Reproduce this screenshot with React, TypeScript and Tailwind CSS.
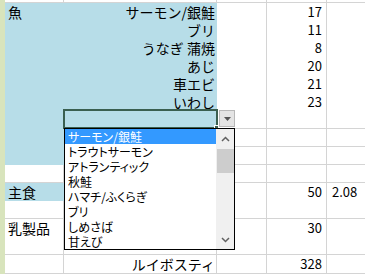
import React from "react";

type Row = {
  a?: string;
  aBlue?: boolean;
  b?: string;
  bBlue?: boolean;
  d?: string;
  e?: string;
};

const rows: Row[] = [
  { a: "魚", aBlue: true, b: "サーモン/銀鮭", bBlue: true, d: "17" },
  { aBlue: true, b: "ブリ", bBlue: true, d: "11" },
  { aBlue: true, b: "うなぎ 蒲焼", bBlue: true, d: "8" },
  { aBlue: true, b: "あじ", bBlue: true, d: "20" },
  { aBlue: true, b: "車エビ", bBlue: true, d: "21" },
  { aBlue: true, b: "いわし", bBlue: true, d: "23" },
  { aBlue: true, bBlue: true },
  { aBlue: true },
  { aBlue: true },
  {},
  { a: "主食", aBlue: true, d: "50", e: "2.08" },
  {},
  { a: "乳製品", d: "30" },
  {},
  { b: "ルイボスティ", d: "328" },
];

const options = [
  "サーモン/銀鮭",
  "トラウトサーモン",
  "アトランティック",
  "秋鮭",
  "ハマチ/ふくらぎ",
  "ブリ",
  "しめさば",
  "甘えび",
];

const blue = "bg-[#b7dde8] border-[#b7dde8]";
const white = "bg-white border-[#d4d4d4]";

function SheetRow({ row }: { row: Row }) {
  return (
    <div className="grid grid-cols-[5px_59px_153px_50px_60px_1fr] h-[18px] leading-[18px]">
      <div className="bg-[#d8e4bc]" />
      <div className={`border-r border-b pl-[3px] text-[14px] ${row.aBlue ? blue : white}`}>
        {row.a}
      </div>
      <div className={`border-r border-b pr-[1px] text-right text-[14px] whitespace-nowrap ${row.bBlue ? blue : white}`}>
        {row.b}
      </div>
      <div className={`border-r border-b ${white}`} />
      <div className={`border-r border-b pr-[4px] text-right text-[13px] ${white}`}>
        {row.d}
      </div>
      <div className={`border-b pl-[5px] text-[13px] whitespace-nowrap ${white}`}>
        {row.e}
      </div>
    </div>
  );
}

function DropdownList() {
  return (
    <div className="absolute left-[64px] top-[128px] w-[171px] h-[122px] border border-black bg-white flex">
      <div className="flex-1 flex flex-col text-[12px] leading-[15px] [font-feature-settings:'palt']">
        {options.map((o, i) => (
          <div
            key={o}
            className={`h-[15px] pl-[3px] whitespace-nowrap ${i === 0 ? "bg-[#3399ff] text-white" : "text-black"}`}
          >
            {o}
          </div>
        ))}
      </div>
      <div className="w-[18px] bg-[#f0f0f0] flex flex-col items-center">
        <div className="h-[20px] w-full flex items-center justify-center">
          <svg width="9" height="6" viewBox="0 0 9 6">
            <path d="M1 5 L4.5 1.5 L8 5" fill="none" stroke="#606060" strokeWidth="1.5" />
          </svg>
        </div>
        <div className="w-[17px] h-[24px] bg-[#cdcdcd]" />
        <div className="flex-1" />
        <div className="h-[18px] w-full flex items-center justify-center">
          <svg width="9" height="6" viewBox="0 0 9 6">
            <path d="M1 1 L4.5 4.5 L8 1" fill="none" stroke="#606060" strokeWidth="1.5" />
          </svg>
        </div>
      </div>
    </div>
  );
}

export default function App() {
  return (
    <div className="relative w-[365px] h-[274px] overflow-hidden bg-white text-black font-['Noto_Sans_CJK_JP',sans-serif]">
      <div className="grid grid-cols-[5px_59px_153px_50px_60px_1fr] h-[3px]">
        <div className="bg-[#d8e4bc]" />
        <div className="border-r border-b border-[#d4d4d4]" />
        <div className="border-r border-b border-[#d4d4d4]" />
        <div className="border-r border-b border-[#d4d4d4]" />
        <div className="border-r border-b border-[#d4d4d4]" />
        <div className="border-b border-[#d4d4d4]" />
      </div>
      {rows.map((r, i) => (
        <SheetRow key={i} row={r} />
      ))}

      {/* active cell */}
      <div className="absolute left-[63px] top-[109px] w-[155px] h-[20px] border-2 border-[#3a5f50]" />
      <div className="absolute left-[214px] top-[125px] w-[5px] h-[5px] bg-[#3a5f50] border border-white" />

      {/* validation arrow */}
      <div className="absolute left-[219px] top-[110px] w-[16px] h-[17px] bg-[#e4e4e4] border border-[#b8b8b8] flex items-center justify-center">
        <svg width="7" height="4" viewBox="0 0 7 4">
          <path d="M0 0 H7 L3.5 4 Z" fill="#555" />
        </svg>
      </div>

      <DropdownList />
    </div>
  );
}
